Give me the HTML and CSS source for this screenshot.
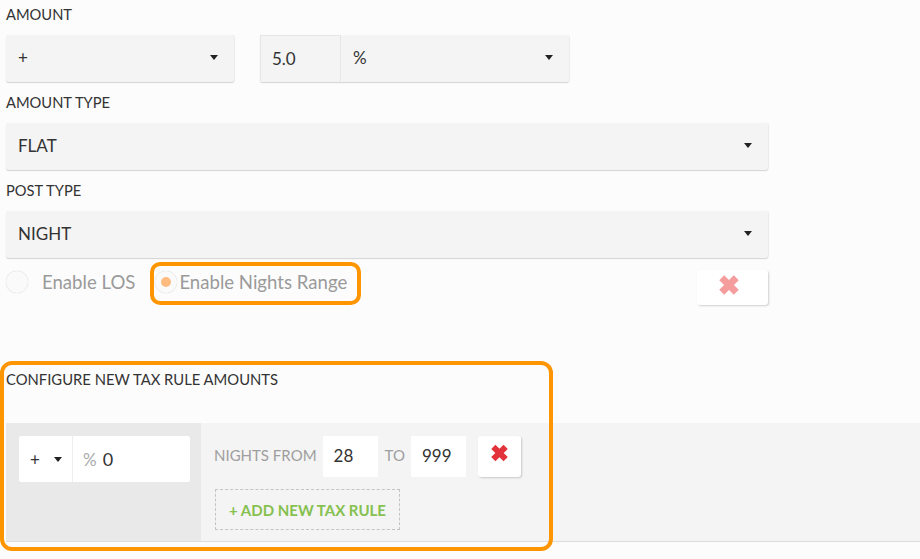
FILE: index.html
```html
<!DOCTYPE html>
<html>
<head>
<meta charset="utf-8">
<link rel="stylesheet" href="styles.css">
</head>
<body>
<div class="form">
  <div class="label first">AMOUNT</div>
  <div class="amount-row">
    <div class="select sign"><span>+</span><i class="caret"></i></div>
    <div class="group">
      <div class="num">5.0</div>
      <div class="select unit"><span>%</span><i class="caret"></i></div>
    </div>
  </div>
  <div class="label">AMOUNT TYPE</div>
  <div class="select wide"><span>FLAT</span><i class="caret"></i></div>
  <div class="label">POST TYPE</div>
  <div class="select wide"><span>NIGHT</span><i class="caret"></i></div>

  <div class="radio-row">
    <div class="radios">
      <label class="radio"><span class="circle"></span><span class="rtext">Enable LOS</span></label>
      <label class="radio highlight"><span class="circle on"><span class="dot"></span></span><span class="rtext">Enable Nights Range</span></label>
    </div>
    <button class="xbtn faded">
      <svg width="26" height="26" viewBox="0 0 20 20"><path d="M2.5 6.3 6.3 2.5 10 6.2 13.7 2.5 17.5 6.3 13.8 10 17.5 13.7 13.7 17.5 10 13.8 6.3 17.5 2.5 13.7 6.2 10Z" fill="#f59c9c"/></svg>
    </button>
  </div>
</div>

<div class="config">
  <div class="ctitle">CONFIGURE NEW TAX RULE AMOUNTS</div>
  <div class="band">
    <div class="left">
      <div class="mini-group">
        <div class="mini-sign"><span>+</span><i class="caret"></i></div>
        <div class="mini-val"><span class="pct">%</span><span>0</span></div>
      </div>
    </div>
    <div class="right">
      <div class="nights-row">
        <span class="muted">NIGHTS FROM</span>
        <div class="box">28</div>
        <span class="muted">TO</span>
        <div class="box">999</div>
        <button class="xbtn small">
          <svg width="23" height="22" viewBox="0 0 20 20"><path d="M2.5 6.3 6.3 2.5 10 6.2 13.7 2.5 17.5 6.3 13.8 10 17.5 13.7 13.7 17.5 10 13.8 6.3 17.5 2.5 13.7 6.2 10Z" fill="#e2323a"/></svg>
        </button>
      </div>
      <div class="add">+ ADD NEW TAX RULE</div>
    </div>
  </div>
  <div class="annot"></div>
</div>
</body>
</html>
```
FILE: styles.css
```css
* { box-sizing: border-box; }
html, body { margin: 0; padding: 0; background: #fcfcfc; }
body {
  font-family: Lato, "Open Sans", sans-serif;
  color: #333;
  width: 920px;
  height: 559px;
  overflow: hidden;
}
.form { padding-left: 6px; width: 768px; }
.label {
  font-size: 14.7px;
  line-height: 20px;
  padding-top: 10px;
  margin-bottom: 11px;
}
.label.first { padding-top: 4px; }
.amount-row { display: flex; gap: 26px; }
.select {
  height: 47px;
  background: #f4f4f4;
  border-radius: 2px;
  box-shadow: 0 1px 1px rgba(0,0,0,0.16), 1px 0 1px rgba(0,0,0,0.06);
  display: flex;
  align-items: center;
  justify-content: space-between;
  padding: 0 16px 2px 12px;
  font-size: 17px;
}
.caret {
  width: 0; height: 0;
  border-left: 4px solid transparent;
  border-right: 4px solid transparent;
  border-top: 5px solid #222;
}
.sign { width: 228px; }
.group {
  display: flex;
  width: 309px;
  height: 47px;
  border-radius: 2px;
  box-shadow: 0 1px 1px rgba(0,0,0,0.16), 1px 0 1px rgba(0,0,0,0.06);
}
.num {
  width: 81px;
  background: #f4f4f4;
  border: 1px solid #e6e6e6;
  border-bottom: none;
  display: flex;
  align-items: center;
  padding: 0 0 2px 11px;
  font-size: 17px;
}
.unit { flex: 1; box-shadow: none; padding-left: 12px; }
.wide { width: 762px; }
.radio-row {
  display: flex;
  justify-content: space-between;
  align-items: flex-start;
  margin-top: 4px;
  height: 43px;
}
.radios { display: flex; align-items: center; }
.radio {
  display: flex;
  align-items: center;
  font-size: 18.6px;
  color: #9a9a9a;
  padding-bottom: 3px;
}
.circle {
  width: 22px; height: 22px;
  border-radius: 50%;
  background: #fafafa;
  box-shadow: 0 0 1px rgba(0,0,0,0.25);
  display: flex; align-items: center; justify-content: center;
}
.dot { width: 10px; height: 10px; border-radius: 50%; background: #ffbb80; }
.rtext { margin-left: 14px; }
.highlight {
  margin-left: 15px;
  border: 4px solid #ff9500;
  border-radius: 10px;
  height: 43px;
  padding: 0 10px 3px 1px;
}
.highlight .rtext { margin-left: 2px; }
.xbtn {
  border: none;
  background: #fff;
  border-radius: 3px;
  box-shadow: 1px 1px 2px rgba(0,0,0,0.18);
  display: flex; align-items: center; justify-content: center;
  padding: 0;
}
.faded { width: 71px; height: 35px; margin-top: 8px; padding: 0 8px 5px 0; }
.small { width: 43px; height: 41px; margin-left: 5px; padding-bottom: 8px; }

.config { position: relative; margin-top: 56px; }
.ctitle {
  font-size: 14.8px;
  line-height: 20px;
  padding: 8px 0 0 6px;
  height: 62px;
}
.band {
  display: flex;
  margin-left: 6px;
  border-bottom: 1px solid #dcdcdc;
  height: 119px;
}
.left { width: 195px; background: #e9e9e9; padding: 13px; }
.mini-group {
  display: flex;
  width: 171px;
  height: 46px;
  background: #fff;
  border-radius: 2px;
}
.mini-sign {
  width: 54px;
  display: flex; align-items: center;
  padding-left: 11px;
  gap: 14px;
  font-size: 17px;
  border-right: 1px solid #eee;
}
.mini-val {
  display: flex; align-items: center;
  padding-left: 10px;
  font-size: 18px;
}
.pct { color: #aaa; margin-right: 6px; font-size: 17px; }
.right { flex: 1; background: #f4f4f4; padding: 13px 13px 0; }
.nights-row { display: flex; align-items: flex-start; height: 41px; }
.muted { color: #9e9e9e; font-size: 15px; line-height: 39px; }
.box {
  width: 55px; height: 41px;
  background: #fff;
  margin: 0 7px 0 6px;
  display: flex; align-items: center;
  padding: 0 0 2px 11px;
  font-size: 17px;
}
.add {
  margin-top: 12px;
  margin-left: 1px;
  width: 185px;
  height: 41px;
  border: 1px dashed #c4c4c4;
  color: #86c04f;
  font-weight: bold;
  font-size: 15px;
  display: flex; align-items: center; justify-content: center;
}
.annot {
  position: absolute;
  left: 0; top: 0;
  width: 553px; height: 190px;
  border: 4px solid #ff9500;
  border-radius: 12px;
  pointer-events: none;
}
```
